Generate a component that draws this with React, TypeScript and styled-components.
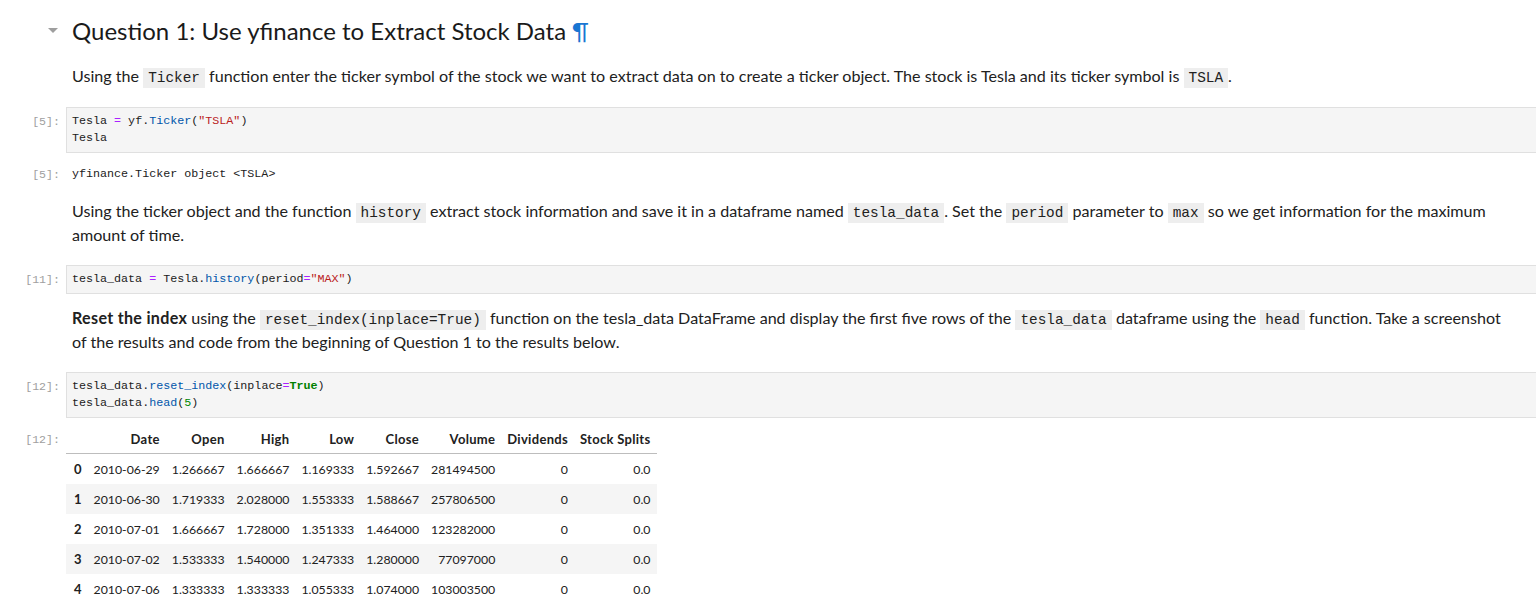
import React from "react";
import styled, { createGlobalStyle } from "styled-components";

const Global = createGlobalStyle`
  html, body { margin: 0; padding: 0; background: #ffffff; }
  body { font-family: Lato, "Open Sans", sans-serif; color: #212121; }
`;

const MONO = `"Liberation Mono", "DejaVu Sans Mono", monospace`;

const Notebook = styled.div`
  display: flex;
  flex-direction: column;
  padding-top: 15px;
  width: 1536px;
  overflow: hidden;
`;

const Cell = styled.div<{ $mt?: number }>`
  display: flex;
  align-items: flex-start;
  margin-top: ${(p) => p.$mt ?? 0}px;
`;

const Prompt = styled.div<{ $pt?: number }>`
  flex: none;
  width: 66px;
  box-sizing: border-box;
  padding-right: 6px;
  padding-top: ${(p) => p.$pt ?? 0}px;
  text-align: right;
  font-family: ${MONO};
  font-size: 11.6px;
  line-height: 17px;
  color: #a0a0a0;
`;

const Collapser = styled.div`
  flex: none;
  width: 66px;
  box-sizing: border-box;
  display: flex;
  justify-content: flex-end;
  padding-right: 8px;
  padding-top: 13px;
`;

const Caret = styled.span`
  width: 0;
  height: 0;
  border-left: 5px solid transparent;
  border-right: 5px solid transparent;
  border-top: 5px solid #9e9e9e;
`;

const Markdown = styled.div`
  flex: 1;
  padding-left: 6px;
  padding-right: 20px;
  font-size: 16.1px;
  line-height: 24px;
  color: #212121;

  b {
    font-weight: 700;
    letter-spacing: 0.3px;
  }
`;

const Heading = styled.h1`
  margin: 0;
  padding-left: 6px;
  font-size: 24px;
  line-height: 31px;
  font-weight: 400;
  color: #1a1a1a;
`;

const Anchor = styled.span`
  color: #1976d2;
  margin-left: 6px;
`;

const InlineCode = styled.code`
  font-family: ${MONO};
  font-size: 14.4px;
  line-height: 18px;
  background: #eeeeee;
  padding: 2px 5px;
  color: #212121;
`;

const CodeBox = styled.div`
  flex: 1;
  background: #f5f5f5;
  border: 1px solid #e0e0e0;
  border-right: none;
  padding: 5px 5px 5px;
  font-family: ${MONO};
  font-size: 11.7px;
  line-height: 17px;
  color: #212121;
  white-space: pre;
`;

const OutputText = styled.div`
  flex: 1;
  padding-left: 6px;
  font-family: ${MONO};
  font-size: 11.7px;
  line-height: 17px;
  color: #212121;
  white-space: pre;
`;

const Op = styled.span`color: #aa22ff;`;
const Str = styled.span`color: #ba2121;`;
const Prop = styled.span`color: #0055aa;`;
const Kw = styled.span`color: #008000; font-weight: bold;`;
const Num = styled.span`color: #008800;`;

const Table = styled.table`
  border-collapse: collapse;
  border-spacing: 0;
  font-size: 12.3px;
  color: #212121;
`;

const Th = styled.th`
  text-align: right;
  font-weight: 700;
  font-size: 13px;
  letter-spacing: 0.3px;
  padding: 0 6px;
  height: 28px;
  border-bottom: 1px solid #bdbdbd;
  white-space: nowrap;
`;

const Tr = styled.tr<{ $odd: boolean }>`
  background: ${(p) => (p.$odd ? "#f5f5f5" : "transparent")};
`;

const RowHead = styled.th`
  text-align: left;
  font-weight: 700;
  font-size: 13px;
  padding: 0 6px 0 8px;
  height: 30px;
`;

const Td = styled.td`
  text-align: right;
  padding: 0 6px;
  height: 30px;
  white-space: nowrap;
`;

const columns = ["Date", "Open", "High", "Low", "Close", "Volume", "Dividends", "Stock Splits"];
const rows = [
  ["2010-06-29", "1.266667", "1.666667", "1.169333", "1.592667", "281494500", "0", "0.0"],
  ["2010-06-30", "1.719333", "2.028000", "1.553333", "1.588667", "257806500", "0", "0.0"],
  ["2010-07-01", "1.666667", "1.728000", "1.351333", "1.464000", "123282000", "0", "0.0"],
  ["2010-07-02", "1.533333", "1.540000", "1.247333", "1.280000", "77097000", "0", "0.0"],
  ["2010-07-06", "1.333333", "1.333333", "1.055333", "1.074000", "103003500", "0", "0.0"],
];

export default function App() {
  return (
    <>
      <Global />
      <Notebook>
        <Cell>
          <Collapser>
            <Caret />
          </Collapser>
          <Heading>
            Question 1: Use yfinance to Extract Stock Data<Anchor>¶</Anchor>
          </Heading>
        </Cell>

        <Cell $mt={18}>
          <Prompt />
          <Markdown>
            Using the <InlineCode>Ticker</InlineCode> function enter the ticker symbol of the stock we want to
            extract data on to create a ticker object. The stock is Tesla and its ticker symbol is{" "}
            <InlineCode>TSLA</InlineCode>.
          </Markdown>
        </Cell>

        <Cell $mt={19}>
          <Prompt $pt={6}>[5]:</Prompt>
          <CodeBox>
            {"Tesla "}
            <Op>=</Op>
            {" yf."}
            <Prop>Ticker</Prop>
            {"("}
            <Str>"TSLA"</Str>
            {")\nTesla"}
          </CodeBox>
        </Cell>

        <Cell $mt={13}>
          <Prompt>[5]:</Prompt>
          <OutputText>{"yfinance.Ticker object <TSLA>"}</OutputText>
        </Cell>

        <Cell $mt={16}>
          <Prompt />
          <Markdown>
            Using the ticker object and the function <InlineCode>history</InlineCode> extract stock information
            and save it in a dataframe named <InlineCode>tesla_data</InlineCode>. Set the{" "}
            <InlineCode>period</InlineCode> parameter to <InlineCode>max</InlineCode> so we get information for
            the maximum amount of time.
          </Markdown>
        </Cell>

        <Cell $mt={18}>
          <Prompt $pt={6}>[11]:</Prompt>
          <CodeBox>
            {"tesla_data "}
            <Op>=</Op>
            {" Tesla."}
            <Prop>history</Prop>
            {"(period"}
            <Op>=</Op>
            <Str>"MAX"</Str>
            {")"}
          </CodeBox>
        </Cell>

        <Cell $mt={12}>
          <Prompt />
          <Markdown>
            <b>Reset the index</b> using the <InlineCode>reset_index(inplace=True)</InlineCode> function on the
            tesla_data DataFrame and display the first five rows of the <InlineCode>tesla_data</InlineCode>{" "}
            dataframe using the <InlineCode>head</InlineCode> function. Take a screenshot of the results and code
            from the beginning of Question 1 to the results below.
          </Markdown>
        </Cell>

        <Cell $mt={18}>
          <Prompt $pt={6}>[12]:</Prompt>
          <CodeBox>
            {"tesla_data."}
            <Prop>reset_index</Prop>
            {"(inplace"}
            <Op>=</Op>
            <Kw>True</Kw>
            {")\ntesla_data."}
            <Prop>head</Prop>
            {"("}
            <Num>5</Num>
            {")"}
          </CodeBox>
        </Cell>

        <Cell $mt={7}>
          <Prompt $pt={6}>[12]:</Prompt>
          <Table>
            <thead>
              <tr>
                <Th />
                {columns.map((c) => (
                  <Th key={c}>{c}</Th>
                ))}
              </tr>
            </thead>
            <tbody>
              {rows.map((r, i) => (
                <Tr key={i} $odd={i % 2 === 1}>
                  <RowHead>{i}</RowHead>
                  {r.map((v, j) => (
                    <Td key={j}>{v}</Td>
                  ))}
                </Tr>
              ))}
            </tbody>
          </Table>
        </Cell>
      </Notebook>
    </>
  );
}
